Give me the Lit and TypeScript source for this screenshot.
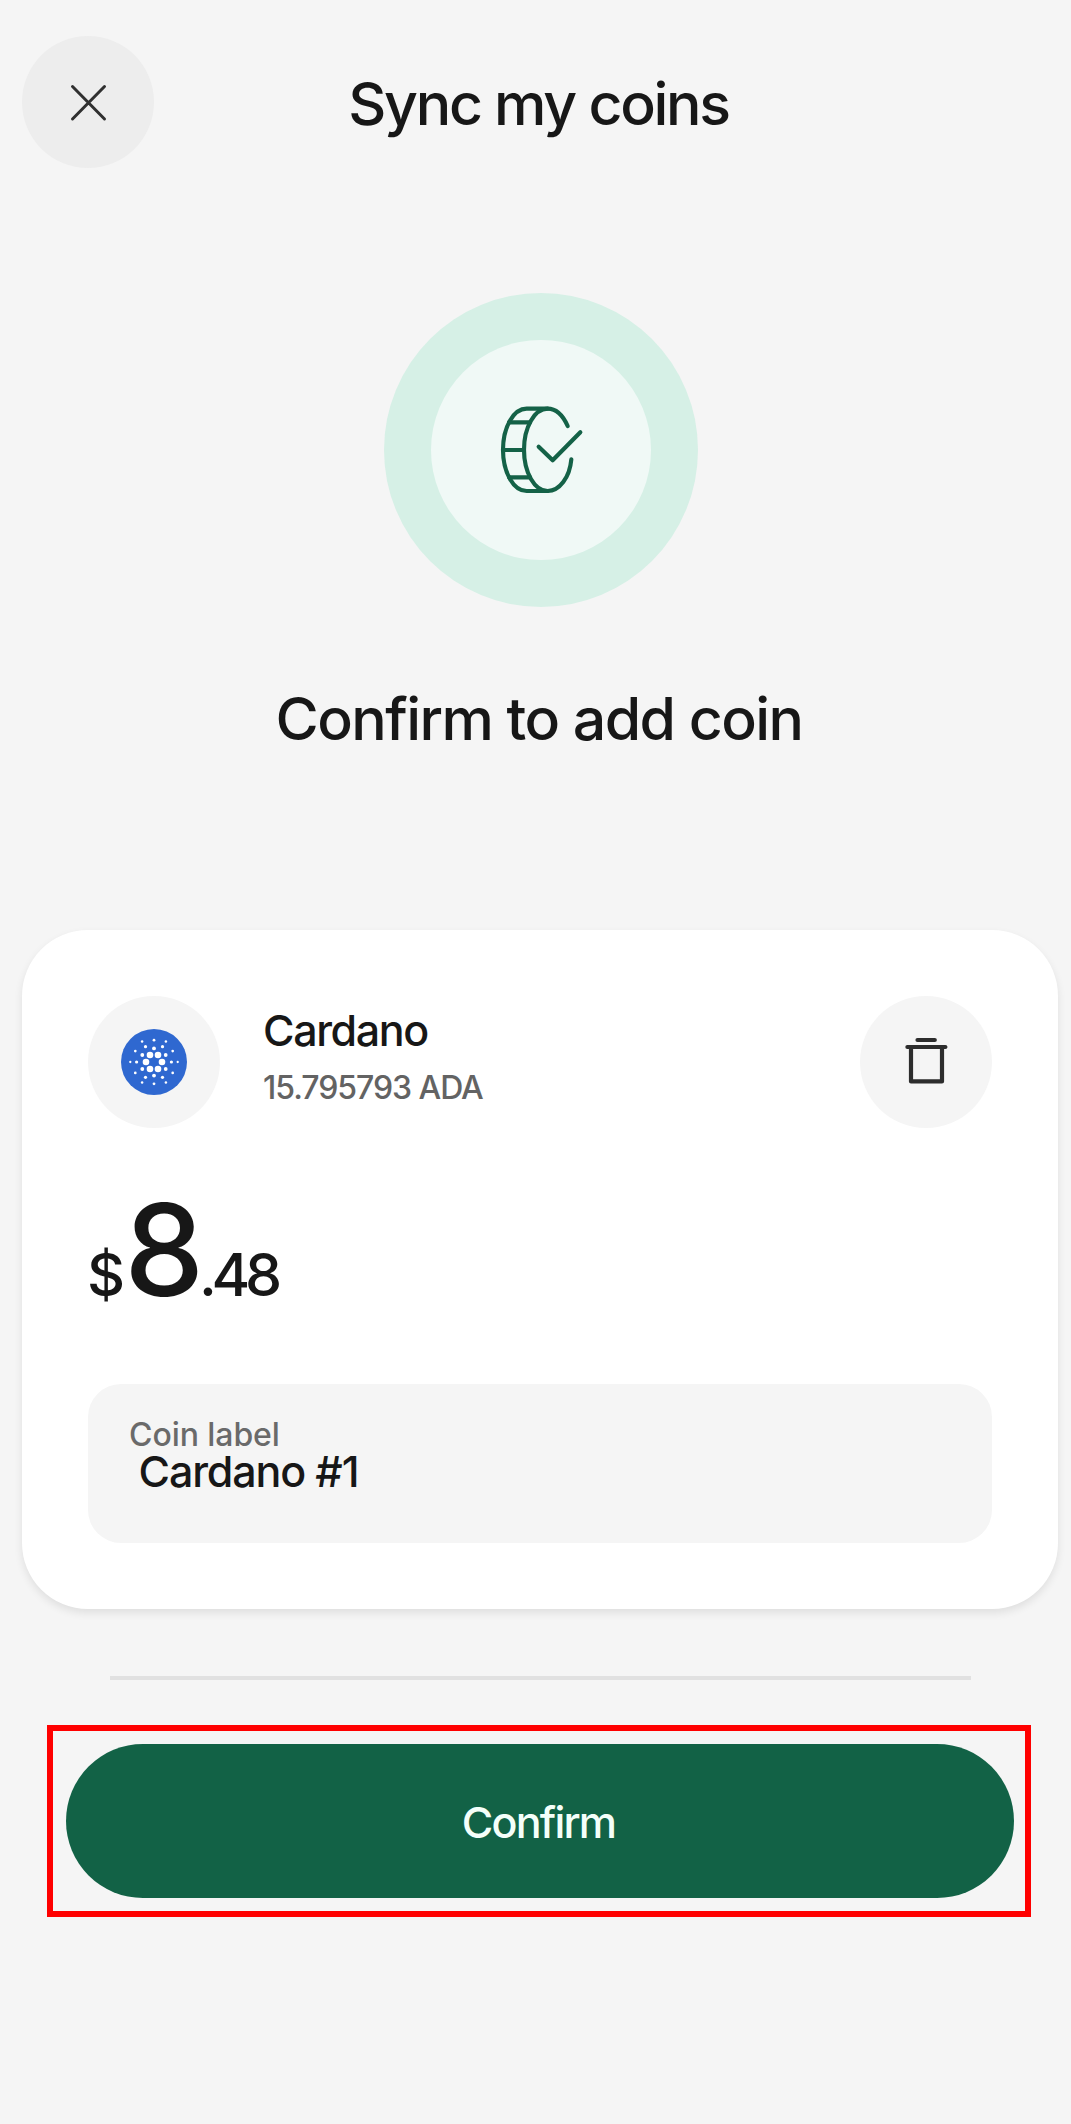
import { LitElement, html, css, svg } from "lit";
import { customElement, property } from "lit/decorators.js";

// Dots of the Cardano mark: x, y and radius measured from the centre.
const CARDANO_DOTS: [number, number, number][] = [
  [8, 0, 3.3], [4, 7, 3.3],
  [0, 13.6, 1.9], [11.7, 7, 1.9],
  [17.4, 0, 1.6], [8.5, 15.3, 1.6],
  [23.7, 0, 1.15], [11.9, 20.6, 1.25], [0, 21.8, 1.4], [18.7, 10.9, 1.35],
];

@customElement("cardano-logo")
class CardanoLogo extends LitElement {
  static styles = css`
    :host { display: block; width: 66px; height: 66px; }
    .logo { display: block; width: 66px; height: 66px; }
  `;

  render() {
    const dots = CARDANO_DOTS.flatMap(([x, y, r]) => {
      const xs = x ? [x, -x] : [0];
      const ys = y ? [y, -y] : [0];
      return xs.flatMap((cx) => ys.map((cy) => svg`<circle cx=${cx} cy=${cy} r=${r} fill="#fff"/>`));
    });
    return html`<svg class="logo" viewBox="-33 -33 66 66">
      <circle r="33" fill="#2f68d0"/>
      ${dots}
    </svg>`;
  }
}

@customElement("coin-card")
class CoinCard extends LitElement {
  @property() name = "";
  @property() balance = "";
  @property() whole = "";
  @property() cents = "";
  @property() label = "";

  static styles = css`
    :host {
      display: block;
      box-sizing: border-box;
      height: 679px;
      padding: 66px;
      border-radius: 66px;
      background: #fff;
      box-shadow: 0 4px 8px rgba(0, 0, 0, 0.09);
    }
    .top { display: flex; height: 132px; }
    .disc {
      flex: none;
      display: grid;
      place-items: center;
      width: 132px;
      height: 132px;
      padding: 0;
      border: 0;
      border-radius: 50%;
      background: #f5f5f5;
    }
    .trash { display: block; width: 48px; height: 52px; }
    .names { flex: 1; display: flex; flex-direction: column; gap: 12px; padding: 8px 0 0 43px; }
    .name { font-size: 43px; font-weight: 500; line-height: 52px; letter-spacing: -1.4px; }
    .balance { font-size: 32px; font-weight: 500; line-height: 40px; letter-spacing: -1.05px; color: #636363; }
    .amount { display: flex; align-items: baseline; height: 128px; margin-top: 58px; font-weight: 500; font-size: 59px; line-height: 60px; }
    .currency { margin-left: -1px; }
    .whole { margin-left: -1px; font-size: 127px; line-height: 129px; letter-spacing: -1px; }
    .cents { margin-left: -4px; letter-spacing: -5.4px; }
    .field { box-sizing: border-box; height: 159px; margin-top: 70px; padding: 33px 41px; border-radius: 33px; background: #f5f5f5; }
    .label { font-size: 32px; font-weight: 500; line-height: 36px; letter-spacing: -0.07px; color: #6a6a6a; }
    .value { margin: -2px 0 0 9.5px; font-size: 43px; font-weight: 500; line-height: 40px; letter-spacing: -1.15px; }
  `;

  render() {
    return html`
      <div class="top">
        <div class="disc"><cardano-logo></cardano-logo></div>
        <div class="names">
          <div class="name">${this.name}</div>
          <div class="balance">${this.balance}</div>
        </div>
        <button class="disc" aria-label="Remove">
          <svg class="trash" viewBox="-24 -26 48 52" fill="none" stroke="#2d2d2d" stroke-width="4.2" stroke-linecap="round" stroke-linejoin="round">
            <path d="M-8.5-22H8.8M-18.6-15H19.4M-15-15V19.4H16V-15"/>
          </svg>
        </button>
      </div>
      <div class="amount">
        <span class="currency">$</span><span class="whole">${this.whole}</span><span class="cents">.${this.cents}</span>
      </div>
      <div class="field">
        <div class="label">Coin label</div>
        <div class="value">${this.label}</div>
      </div>
    `;
  }
}

@customElement("app-root")
class AppRoot extends LitElement {
  static styles = css`
    :host {
      display: block;
      box-sizing: border-box;
      min-height: 2124px;
      padding: 36px 13px 0 22px;
      background: #f5f5f5;
      color: #171717;
      font-family: Inter, "Liberation Sans", sans-serif;
    }
    .header { display: grid; grid-template-columns: 132px 1fr 132px; align-items: center; height: 132px; }
    .close { display: grid; place-items: center; width: 132px; height: 132px; padding: 0; border: 0; border-radius: 50%; background: #ededed; }
    .close-icon { display: block; width: 40px; height: 40px; }
    .title { padding: 3px 3px 0 0; text-align: center; font-size: 59px; font-weight: 500; line-height: 60px; letter-spacing: -2.29px; white-space: nowrap; }
    .hero { display: flex; flex-direction: column; align-items: center; margin-top: 125px; }
    .halo { display: grid; place-items: center; width: 314px; height: 314px; margin-left: 2px; border-radius: 50%; background: #d6f0e6; }
    .core { display: grid; place-items: center; width: 220px; height: 220px; border-radius: 50%; background: #f0f9f6; }
    .coin { display: block; width: 140px; height: 130px; }
    .heading { margin-top: 82px; padding-right: 2px; font-size: 59px; font-weight: 500; line-height: 60px; letter-spacing: -1.56px; white-space: nowrap; }
    .card { margin-top: 181px; }
    .divider { height: 4px; margin: 67px 87px 0 88px; background: #e1e1e1; }
    .callout { margin: 45px 27px 0 25px; padding: 13px 11px 13px 13px; border: 6px solid #f00; }
    .confirm {
      display: block;
      width: 100%;
      height: 154px;
      padding: 2px 3px 0 0;
      border: 0;
      border-radius: 77px;
      background: #126246;
      color: #f4fffa;
      font: 500 43px/52px Inter, "Liberation Sans", sans-serif;
      letter-spacing: -1.8px;
    }
  `;

  render() {
    return html`
      <div class="header">
        <button class="close" aria-label="Close">
          <svg class="close-icon" viewBox="-20.5 -20.5 40 40" fill="none" stroke="#303030" stroke-width="3" stroke-linecap="round">
            <path d="M-16-16 16 16.5M16-16-16 16.5"/>
          </svg>
        </button>
        <div class="title">Sync my coins</div>
      </div>
      <div class="hero">
        <div class="halo">
          <div class="core">
            <svg class="coin" viewBox="3 15 420 390" fill="none" stroke="#146247" stroke-width="12.5" stroke-linecap="round" stroke-linejoin="round">
              <path d="M233 86H170A71 123.5 0 0 0 170 333H233"/>
              <path d="M293 138C278 105 256 86 233 86A71 123.5 0 0 0 233 333C268 333 299 293 304 238"/>
              <path d="M117 127H180M99 210H162M117 292H180"/>
              <path d="M206 200 248 241 331 157"/>
            </svg>
          </div>
        </div>
        <div class="heading">Confirm to add coin</div>
      </div>
      <coin-card class="card" name="Cardano" balance="15.795793 ADA" whole="8" cents="48" label="Cardano #1"></coin-card>
      <div class="divider"></div>
      <div class="callout"><button class="confirm">Confirm</button></div>
    `;
  }
}
